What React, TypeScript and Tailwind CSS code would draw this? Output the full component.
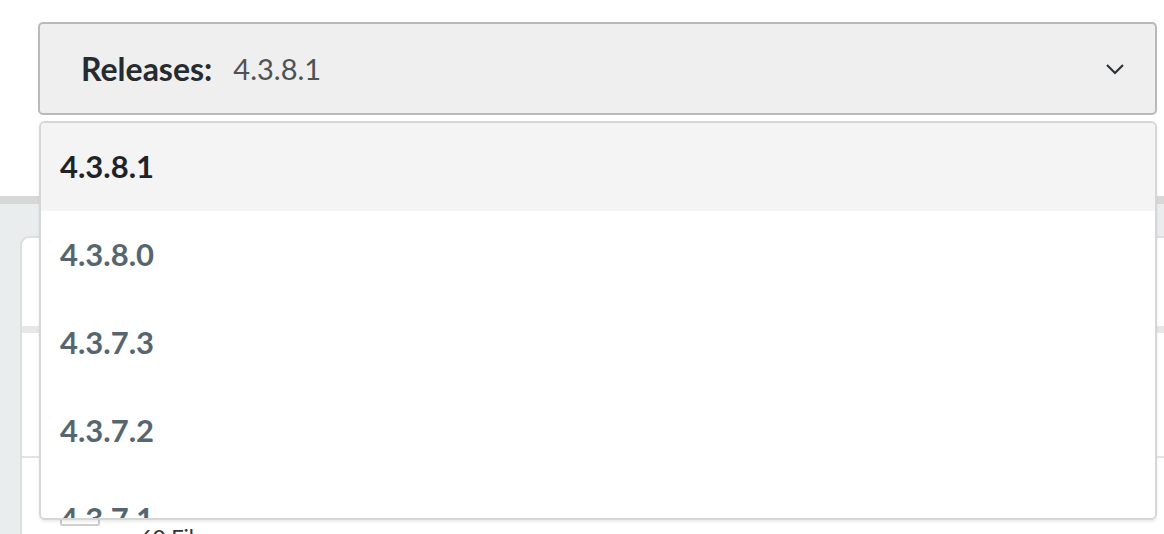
import React from "react";

const versions = ["4.3.8.1", "4.3.8.0", "4.3.7.3", "4.3.7.2", "4.3.7.1"];

export default function App() {
  return (
    <div className="relative w-[1164px] h-[534px] overflow-hidden bg-white font-['Lato',sans-serif]">
      <div className="h-[196px] pt-[22px] pl-[38px] pr-[7px]">
        <div className="flex items-center w-full h-[93px] rounded-[5px] border-2 border-[#b9b9b9] bg-[#efefef] pl-[41px] pr-[30px]">
          <span className="text-[32px] font-bold text-[#262b2f]">Releases:</span>
          <span className="ml-[21px] text-[29px] text-[#4d5256]">4.3.8.1</span>
          <svg className="ml-auto" width="20" height="12" viewBox="0 0 20 12">
            <polyline points="2,2 10,10 18,2" fill="none" stroke="#2e3236" strokeWidth="2.2" />
          </svg>
        </div>
      </div>
      <div className="h-[8px] bg-[#d8d8d8]" />
      <div className="h-[330px] bg-[#eaeded] pl-[20px] pt-[32px]">
        <div className="h-full bg-white rounded-tl-[9px] border-l-2 border-t-2 border-[#dedede]">
          <div className="h-[95px] border-b-[7px] border-[#e6e8e8]" />
          <div className="h-[125px] border-b-2 border-[#e3e3e3]" />
          <div className="flex items-start pl-[38px] pt-[36px]">
            <div className="w-[40px] h-[32px] border-2 border-[#cfcfcf] rounded-[2px]" />
            <span className="ml-[40px] mt-[26px] text-[22px] text-[#333]">60 Files</span>
          </div>
        </div>
      </div>

      <div className="absolute left-[39px] top-[121px] w-[1118px] h-[399px] overflow-hidden rounded-[6px] border-2 border-[#d6d6d6] bg-white shadow-[0_2px_3px_rgba(0,0,0,0.08)]">
        {versions.map((v, i) => (
          <div
            key={v}
            className={
              i === 0
                ? "flex items-center h-[88px] pl-[19px] pb-[2px] bg-[#f4f4f4] text-[31px] font-bold text-[#1f2327]"
                : "flex items-center h-[88px] pl-[19px] pb-[2px] bg-white text-[31px] font-bold text-[#56666f]"
            }
          >
            {v}
          </div>
        ))}
      </div>
    </div>
  );
}
